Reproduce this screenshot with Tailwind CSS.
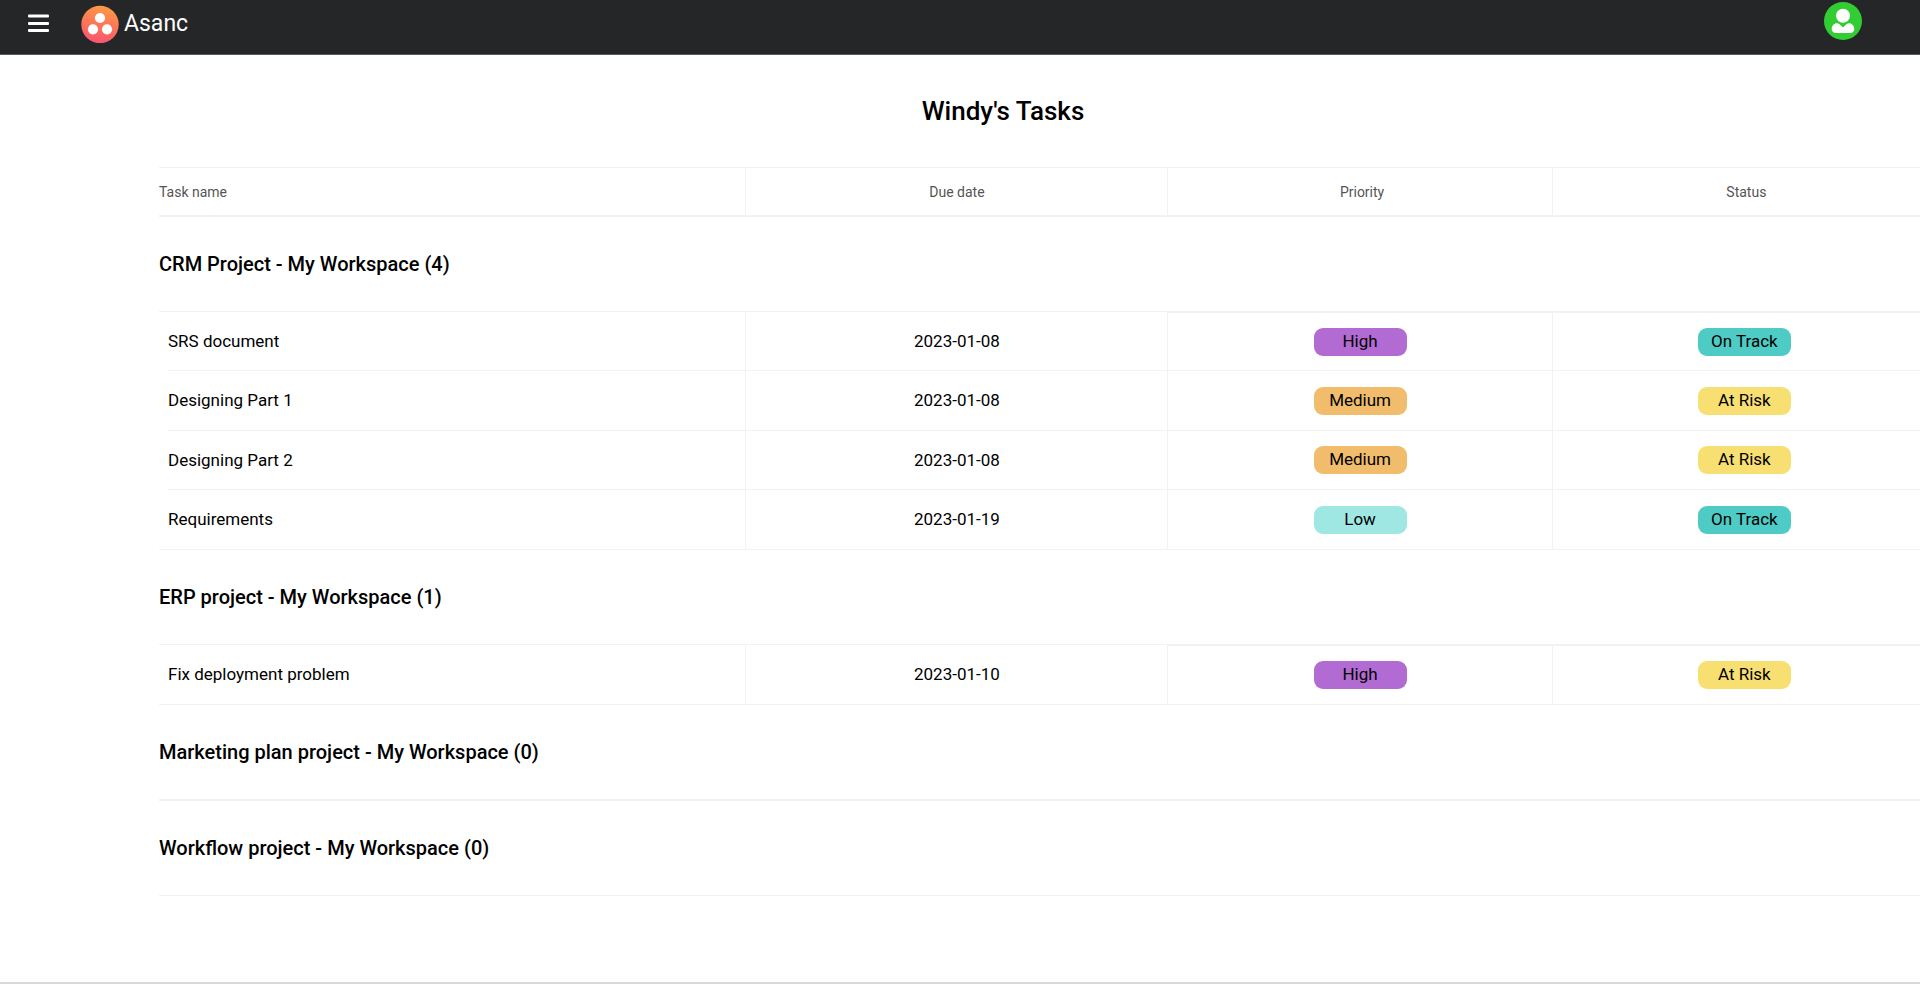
<!DOCTYPE html>
<html lang="en">
<head>
<meta charset="utf-8">
<meta name="viewport" content="width=device-width, initial-scale=1">
<title>Asanc - Windy's Tasks</title>
<script src="https://cdn.jsdelivr.net/npm/@tailwindcss/browser@4"></script>
</head>
<body class="flex min-h-screen flex-col overflow-x-hidden bg-white font-['Roboto',sans-serif] text-black">
<header class="flex h-[55px] items-start justify-between border-b border-[#5a5b5c] bg-[#252628] pr-[58px] pl-7">
  <div class="flex items-center pt-1">
    <button type="button" aria-label="Open menu" class="mr-8 block h-[38px] w-[21px] text-white">
      <svg class="h-[38px] w-[21px]" viewBox="0 0 21 38" fill="currentColor"><rect y="9.5" width="21" height="3" rx="1"/><rect y="17" width="21" height="3" rx="1"/><rect y="24" width="21" height="3" rx="1"/></svg>
    </button>
    <a href="#" class="flex items-center gap-[5px] text-white">
      <svg class="size-[38px]" viewBox="0 0 38 38" aria-hidden="true">
        <defs><linearGradient id="brand" x1="0.6" y1="0" x2="0.4" y2="1"><stop offset="0" stop-color="#fd9a42"/><stop offset="1" stop-color="#f95370"/></linearGradient></defs>
        <circle cx="19" cy="19.500" r="18.700" fill="url(#brand)"/>
        <g fill="#fff"><circle cx="19" cy="13" r="5.1"/><circle cx="12" cy="24.3" r="5.1"/><circle cx="26" cy="24.3" r="5.1"/></g>
      </svg>
      <span class="text-[23px] leading-10">Asanc</span>
    </a>
  </div>
  <button type="button" aria-label="Account" class="mt-0.5 block size-[38px]">
    <svg class="size-[38px]" viewBox="0 0 38 38"><circle cx="19" cy="19" r="19" fill="#32cd32"/><circle cx="19" cy="13.7" r="7" fill="#fff"/><path fill="#fff" d="M13 21.2c1.4 0 2.300.7 3.300 1.800l2.700 2.600 2.700-2.600c1-1.100 1.900-1.800 3.300-1.800 3 0 5.300 2.500 5.300 5.500 0 2.600-1.500 4.300-4 4.300H11.700c-2.500 0-4-1.700-4-4.300 0-3 2.300-5.500 5.300-5.500z"/></svg>
  </button>
</header>
<main class="grow pt-9 pl-[159px]">
  <h1 class="mr-[73px] mb-9 text-center text-[26px] leading-10 font-medium">Windy's Tasks</h1>
  <table class="w-[calc(100%+16px)] table-fixed border-separate border-spacing-0">
    <colgroup><col class="w-[33%]"><col class="w-[23.75%]"><col><col></colgroup>
    <thead class="text-sm text-[#555]">
      <tr class="h-[50px]">
        <th class="border-t border-b-2 border-[#f1f2f2] p-0 text-left font-normal">Task name</th>
        <th class="border-t border-b-2 border-l border-[#f1f2f2] p-0 font-normal">Due date</th>
        <th class="border-t border-b-2 border-l border-[#f1f2f2] p-0 pl-1 font-normal">Priority</th>
        <th class="border-t border-b-2 border-l border-[#f1f2f2] p-0 pl-1 font-normal">Status</th>
      </tr>
    </thead>
    <tbody id="groups"></tbody>
  </table>
</main>
<div class="h-0.5 bg-[#d9d9d9]"></div>
<script>
const groups = [
  ['CRM Project - My Workspace', [
    ['SRS document', '2023-01-08', 'High', 'On Track'],
    ['Designing Part 1', '2023-01-08', 'Medium', 'At Risk'],
    ['Designing Part 2', '2023-01-08', 'Medium', 'At Risk'],
    ['Requirements', '2023-01-19', 'Low', 'On Track']]],
  ['ERP project - My Workspace', [
    ['Fix deployment problem', '2023-01-10', 'High', 'At Risk']]],
  ['Marketing plan project - My Workspace', []],
  ['Workflow project - My Workspace', []]
];
const colors = {
  'High': 'bg-[#b36bd4]', 'Medium': 'bg-[#f1bd6c]', 'Low': 'bg-[#9ee7e3]',
  'On Track': 'bg-[#4ecbc4]', 'At Risk': 'bg-[#f8df72]'
};
const badge = t => `<span class="mx-auto block h-7 w-[93px] rounded-[9px] text-center leading-[27px] ${colors[t]}">${t}</span>`;
document.getElementById('groups').outerHTML = groups.map(([name, tasks], g) => {
  const rule = name.startsWith('Marketing') ? 'h-24 border-b-2' : 'h-[95px] border-b';
  const head = `<tr><th colspan="4" scope="rowgroup" class="${rule} border-[#f1f2f2] p-0 text-left text-xl font-medium">${name} (${tasks.length})</th></tr>`;
  const rows = tasks.map(([task, due, priority, status], i) => {
    const last = i === tasks.length - 1;
    const height = i % 2 || last ? 'h-[60px]' : 'h-[59px]';
    const inner = last ? 'h-[59px]' : i % 2 ? 'h-[60px] border-b' : 'h-[59px] border-b';
    const edge = i === 0 ? 'border-t' : '';
    const rest = `border-b border-l border-[#f1f2f2] p-0 text-center`;
    return `<tr class="${height} text-[17px] leading-7">
      <td class="border-[#f1f2f2] p-0 ${last ? 'border-b' : ''}"><div class="ml-[9px] flex items-center border-[#f1f2f2] pb-px ${inner}">${task}</div></td>
      <td class="${rest} pb-px">${due}</td>
      <td class="${rest} ${edge}">${badge(priority)}</td>
      <td class="${rest} ${edge}">${badge(status)}</td></tr>`;
  }).join('');
  return `<tbody>${head}${rows}</tbody>`;
}).join('');
</script>
</body>
</html>
